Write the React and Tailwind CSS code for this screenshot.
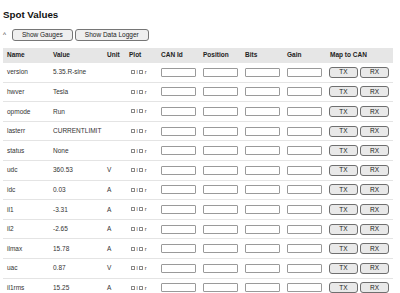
import React from 'react'

const rows = [
  { name: 'version', value: '5.35.R-sine', unit: '' },
  { name: 'hwver', value: 'Tesla', unit: '' },
  { name: 'opmode', value: 'Run', unit: '' },
  { name: 'lasterr', value: 'CURRENTLIMIT', unit: '' },
  { name: 'status', value: 'None', unit: '' },
  { name: 'udc', value: '360.53', unit: 'V' },
  { name: 'idc', value: '0.03', unit: 'A' },
  { name: 'il1', value: '-3.31', unit: 'A' },
  { name: 'il2', value: '-2.65', unit: 'A' },
  { name: 'ilmax', value: '15.78', unit: 'A' },
  { name: 'uac', value: '0.87', unit: 'V' },
  { name: 'il1rms', value: '15.25', unit: 'A' },
]

function Box() {
  return <span className="inline-block w-[4px] h-[4px] border-[0.5px] border-[#888] rounded-[0.5px] bg-white" />
}

function InputBox() {
  return <div className="w-[35px] h-[9px] border-[0.75px] border-[#9a9a9a] rounded-[1px] bg-white" />
}

function SmallButton({ children }) {
  return (
    <button className="w-[29px] h-[11px] flex items-center justify-center border border-[#6f6f6f] rounded-[3px] bg-[#e9e9e9] text-[6.5px] text-[#222]">
      {children}
    </button>
  )
}

export default function App() {
  return (
    <div className="bg-white min-h-screen px-[3px] text-[#333] text-[6.5px]" style={{ fontFamily: '"Liberation Sans", Arial, sans-serif' }}>
      <h2 className="pt-[9px] text-[9.75px] leading-[12px] font-bold text-[#111]">Spot Values</h2>

      <div className="mt-[8px] flex items-center h-[12px]">
        <span className="w-[9px] text-[6.5px] text-[#333]">^</span>
        <button className="h-[12px] px-[9px] border border-[#767676] rounded-[3px] bg-[#efefef] text-[6.5px] text-[#222]">Show Gauges</button>
        <button className="ml-[2px] h-[12px] px-[9px] border border-[#767676] rounded-[3px] bg-[#efefef] text-[6.5px] text-[#222]">Show Data Logger</button>
      </div>

      <table className="mt-[7px] w-[390px] table-fixed border-collapse">
        <colgroup>
          <col className="w-[46px]" />
          <col className="w-[54px]" />
          <col className="w-[22px]" />
          <col className="w-[32px]" />
          <col className="w-[42px]" />
          <col className="w-[42px]" />
          <col className="w-[42px]" />
          <col className="w-[43px]" />
          <col className="w-[67px]" />
        </colgroup>
        <thead>
          <tr className="h-[14.5px] bg-[#e6e6e6] text-left font-bold text-[#222]">
            <th className="pl-[4px] font-bold">Name</th>
            <th className="pl-[4px] font-bold">Value</th>
            <th className="pl-[4px] font-bold">Unit</th>
            <th className="pl-[4px] font-bold">Plot</th>
            <th className="pl-[4px] font-bold">CAN Id</th>
            <th className="pl-[4px] font-bold">Position</th>
            <th className="pl-[4px] font-bold">Bits</th>
            <th className="pl-[4px] font-bold">Gain</th>
            <th className="pl-[4px] font-bold">Map to CAN</th>
          </tr>
        </thead>
        <tbody>
          {rows.map((r) => (
            <tr key={r.name} className="h-[19.6px] border-b border-[#e4e4e4]">
              <td className="pl-[4px]">{r.name}</td>
              <td className="pl-[4px]">{r.value}</td>
              <td className="pl-[4px]">{r.unit}</td>
              <td className="pl-[6px]">
                <div className="flex items-center text-[5.5px] text-[#444]">
                  <Box />
                  <span className="mx-[1.5px]">l</span>
                  <Box />
                  <span className="ml-[1.5px]">r</span>
                </div>
              </td>
              <td className="pl-[4px]"><InputBox /></td>
              <td className="pl-[4px]"><InputBox /></td>
              <td className="pl-[4px]"><InputBox /></td>
              <td className="pl-[4px]"><InputBox /></td>
              <td className="pl-[3px]">
                <div className="flex gap-[2px]">
                  <SmallButton>TX</SmallButton>
                  <SmallButton>RX</SmallButton>
                </div>
              </td>
            </tr>
          ))}
        </tbody>
      </table>
    </div>
  )
}
